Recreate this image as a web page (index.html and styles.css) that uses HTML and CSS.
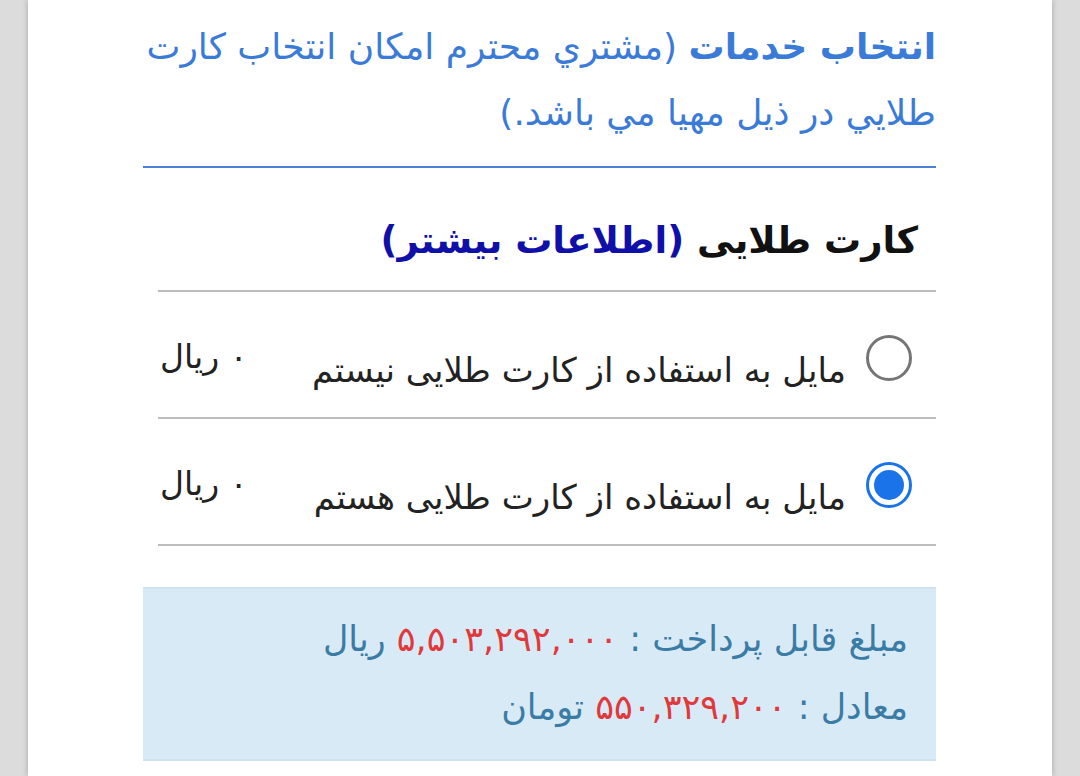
FILE: index.html
```html
<!DOCTYPE html>
<html lang="fa" dir="rtl">
<head>
<meta charset="utf-8">
<link rel="stylesheet" href="styles.css">
</head>
<body>
<div class="page">
  <div class="content">
    <h2 class="services-title"><span class="strong">انتخاب خدمات</span> (مشتري محترم امكان انتخاب كارت طلايي در ذيل مهيا مي باشد.)</h2>
    <div class="card-section">
      <h3 class="card-title">کارت طلایی <a class="more">(اطلاعات بیشتر)</a></h3>
      <div class="option">
        <label class="opt-label"><span class="radio"></span><span class="opt-text">مایل به استفاده از کارت طلایی نیستم</span></label>
        <span class="price">۰ ریال</span>
      </div>
      <div class="option">
        <label class="opt-label"><span class="radio checked"></span><span class="opt-text">مایل به استفاده از کارت طلایی هستم</span></label>
        <span class="price">۰ ریال</span>
      </div>
    </div>
    <div class="summary">
      <p>مبلغ قابل پرداخت : <span class="num">۵,۵۰۳,۲۹۲,۰۰۰</span> ریال</p>
      <p>معادل : <span class="num">۵۵۰,۳۲۹,۲۰۰</span> تومان</p>
    </div>
  </div>
</div>
</body>
</html>
```
FILE: styles.css
```css
* { box-sizing: border-box; }
html, body { margin: 0; padding: 0; }
body {
  background: #dcdcdc;
  font-family: "DejaVu Sans", "Noto Sans", sans-serif;
  direction: rtl;
}
.page {
  width: 1024px;
  margin: 0 28px;
  min-height: 776px;
  background: #fff;
  box-shadow: 0 0 6px rgba(0,0,0,0.25);
  overflow: hidden;
}
.content {
  padding: 0 116px 0 115px;
}
.services-title {
  margin: 0;
  padding: 14px 0 20px;
  font-size: 36px;
  line-height: 66px;
  font-weight: normal;
  color: #3b7bd8;
  border-bottom: 2px solid #4a80d8;
}
.services-title .strong { font-weight: bold; }
.card-section {
  padding-left: 15px;
}
.card-title {
  margin: 0;
  padding: 43px 18px 19px 0;
  font-size: 37px;
  line-height: 60px;
  font-weight: bold;
  color: #111;
  border-bottom: 2px solid #bdbdbd;
}
.more { color: #1010a8; }
.option {
  height: 127px;
  border-bottom: 2px solid #bdbdbd;
  display: flex;
  justify-content: space-between;
  align-items: flex-start;
  padding: 43px 24px 0 0;
}
.opt-label {
  display: flex;
  align-items: flex-start;
  gap: 20px;
}
.radio {
  width: 46px;
  height: 46px;
  border-radius: 50%;
  border: 3px solid #757575;
  flex: none;
  position: relative;
  background: #fff;
}
.radio.checked {
  border: 3px solid #1a73e8;
}
.radio.checked::after {
  content: "";
  position: absolute;
  left: 5px; top: 5px; right: 5px; bottom: 5px;
  border-radius: 50%;
  background: #1a73e8;
}
.opt-text {
  font-size: 34px;
  line-height: 44px;
  color: #222;
  margin-top: 13px;
}
.price {
  font-size: 33px;
  line-height: 44px;
  color: #222;
  margin-left: 2px;
  margin-top: 0;
}
.summary {
  margin-top: 41px;
  background: #d9eaf7;
  border-top: 2px solid #cfe3f1;
  border-bottom: 2px solid #cfe3f1;
  padding: 16px 28px 22px;
  color: #3a7ca5;
  font-size: 35px;
  line-height: 68px;
  height: 174px;
}
.summary p { margin: 0; }
.summary .num { color: #e0393b; }
```
